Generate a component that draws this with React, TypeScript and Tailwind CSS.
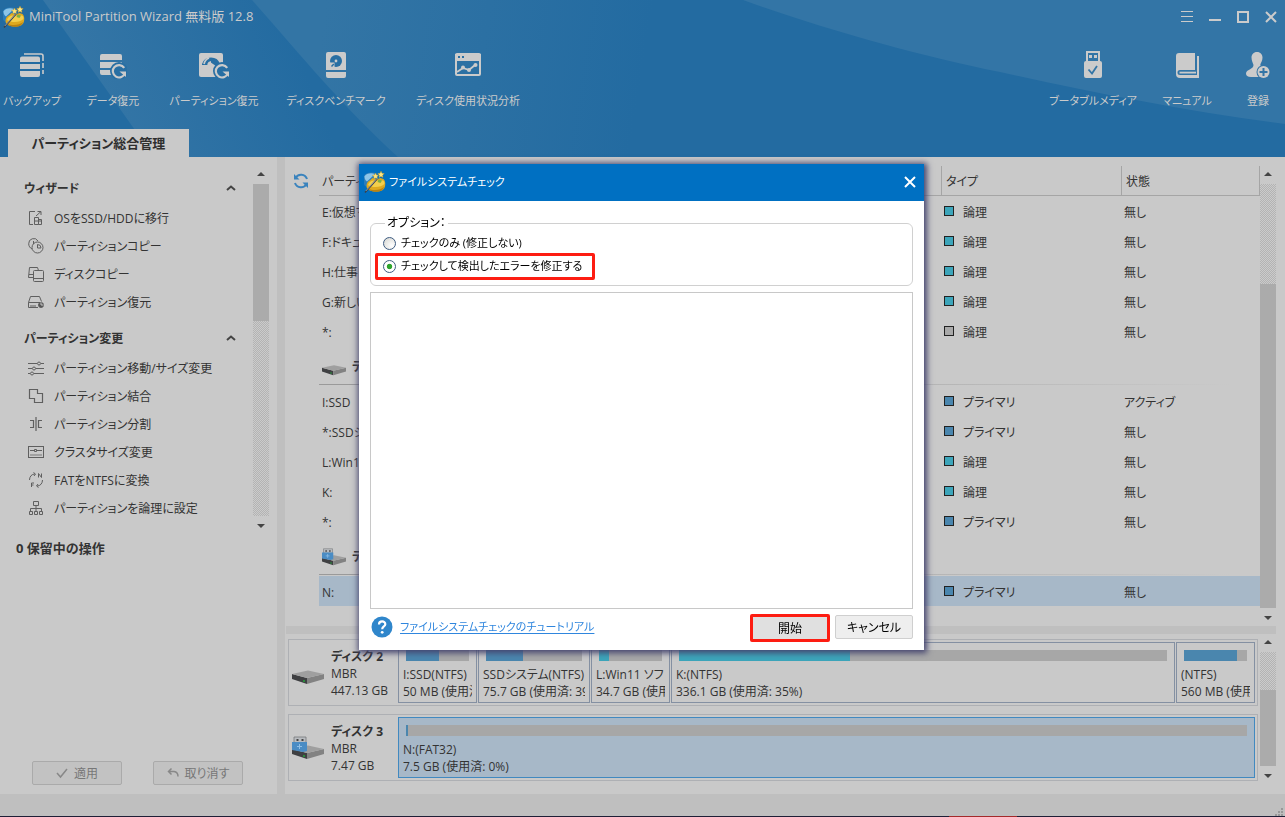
import { useState } from "react";
import type { ReactNode } from "react";

type Kind = "logical" | "primary" | "free";

type PartitionRow = { name: string; kind: Kind; status: string; selected?: boolean };

const KIND_LABEL: Record<Kind, string> = {
  logical: "論理",
  primary: "プライマリ",
  free: "論理",
};

const KIND_COLOR: Record<Kind, string> = {
  logical: "bg-[#3ca5ba]",
  primary: "bg-[#4a86ae]",
  free: "bg-[#a9a9a9]",
};

const TABLE: { disk: string; usb?: boolean; rows: PartitionRow[] }[] = [
  {
    disk: "",
    rows: [
      { name: "E:仮想マシン", kind: "logical", status: "無し" },
      { name: "F:ドキュメント", kind: "logical", status: "無し" },
      { name: "H:仕事", kind: "logical", status: "無し" },
      { name: "G:新しい", kind: "logical", status: "無し" },
      { name: "*:", kind: "free", status: "無し" },
    ],
  },
  {
    disk: "ディスク 2",
    rows: [
      { name: "I:SSD", kind: "primary", status: "アクティブ" },
      { name: "*:SSDシステム", kind: "primary", status: "無し" },
      { name: "L:Win11 ソフト", kind: "logical", status: "無し" },
      { name: "K:", kind: "logical", status: "無し" },
      { name: "*:", kind: "primary", status: "無し" },
    ],
  },
  {
    disk: "ディスク 3",
    usb: true,
    rows: [{ name: "N:", kind: "primary", status: "無し", selected: true }],
  },
];

type Block = { name: string; info: string; used: number; kind: Kind; width: string; selected?: boolean };

const DISKS: { name: string; size: string; usb?: boolean; blocks: Block[] }[] = [
  {
    name: "ディスク 2",
    size: "447.13 GB",
    blocks: [
      { name: "I:SSD(NTFS)", info: "50 MB (使用済: 52%)", used: 52, kind: "primary", width: "w-[79px]" },
      { name: "SSDシステム(NTFS)", info: "75.7 GB (使用済: 39%)", used: 39, kind: "primary", width: "w-[112px]" },
      { name: "L:Win11 ソフト", info: "34.7 GB (使用済: 16%)", used: 16, kind: "logical", width: "w-[79px]" },
      { name: "K:(NTFS)", info: "336.1 GB (使用済: 35%)", used: 35, kind: "logical", width: "flex-1" },
      { name: "(NTFS)", info: "560 MB (使用済: 84%)", used: 84, kind: "primary", width: "w-[79px]" },
    ],
  },
  {
    name: "ディスク 3",
    size: "7.47 GB",
    usb: true,
    blocks: [
      { name: "N:(FAT32)", info: "7.5 GB (使用済: 0%)", used: 0, kind: "primary", width: "flex-1", selected: true },
    ],
  },
];

/* ---------- icons ---------- */

function Logo() {
  return (
    <svg viewBox="0 0 22 22" className="size-[22px] shrink-0" aria-hidden="true">
      <path d="M0 5.500C0 3 4 1.500 8 1.500s6 1.500 6 3.500v7c0 3-4 4-8 4s-6-1-6-3z" fill="#2b7dbb" />
      <path d="M.5 5.500C2 2.500 7 1.500 11 3L3 10.500C1.500 9.500.5 8 .5 5.500z" fill="#8cc5e8" />
      <path d="M2.500 15c0-3 1.500-5 4-6l2-2 4 1.500 4-1.500 3 1c1.500 1.500 2 3.500 1.700 6-.5 5-4 6.500-9.200 6.500-5 0-9.500-1.500-9.500-5.500z" fill="#dfa91f" />
      <path d="M4 14c1-3 3-4.500 6-4.500h9c1.500 1 1.500 2 1.400 3.500-3 3-11 4.500-16.400 1z" fill="#f3cf4c" />
      <path d="M4.500 17.500c4 2.500 12 2 15.500-1.500-1 3.500-4 4.700-8 4.700-3.500 0-6.500-1-7.500-3.200z" fill="#b98212" />
      <path d="M11.500 2l1 2 2 .3-1.500 1.500.3 2.200-1.800-1-1.800 1L10 5.800 8.500 4.300l2-.3zM17 0l1 2.200 2.300.4-1.700 1.600.4 2.300-2-1.100-2 1.100.4-2.300-1.700-1.600 2.300-.4z" fill="#ffe680" stroke="#b98a16" strokeWidth=".4" />
      <path d="M14.500 8.500l3.500 1-1.500 2.500-3-1z" fill="#7fb043" />
      <path d="M1 21.500L13 8" stroke="#3d4148" strokeWidth="1.500" />
      <path d="M1.800 20L12.500 8" stroke="#c3ccd2" strokeWidth=".6" />
    </svg>
  );
}

function BackupIcon() {
  return (
    <svg viewBox="0 0 26 28" className="h-7 w-[26px]" aria-hidden="true">
      <path d="M1 7.500a2 2 0 0 1 2-2h16a2 2 0 0 1 2 2V11H1zM1 13h20v5H1zM1 20h20v4a2 2 0 0 1-2 2H3a2 2 0 0 1-2-2z" fill="currentColor" />
      <path d="M5 3h17a2 2 0 0 1 2 2v5M24 12v5M24 19v4" stroke="currentColor" strokeWidth="1.600" fill="none" />
    </svg>
  );
}

function Redo({ x, y }: { x: number; y: number }) {
  return (
    <g transform={`translate(${x} ${y})`}>
      <circle cx="8" cy="8" r="9" fill="#286fa3" />
      <path d="M13.200 4.800A6.200 6.200 0 1 0 14 10" fill="none" stroke="currentColor" strokeWidth="2.200" />
      <path d="M8.500 8.500H15V14z" fill="currentColor" />
    </g>
  );
}

function DataRecoveryIcon() {
  return (
    <svg viewBox="0 0 28 28" className="size-7" aria-hidden="true">
      <path d="M1 5a2 2 0 0 1 2-2h18a2 2 0 0 1 2 2v4H1zM1 11h22v6H1zM1 19h22v5H3a2 2 0 0 1-2-2z" fill="currentColor" />
      <Redo x={12} y={12} />
    </svg>
  );
}

function PartitionRecoveryIcon() {
  return (
    <svg viewBox="0 0 32 28" className="h-7 w-8" aria-hidden="true">
      <rect x="1" y="2" width="24" height="24" rx="2" fill="currentColor" />
      <path d="M4 13a9.500 9.500 0 0 1 18 0l-4 2-6-4-3 3H4z" fill="#286fa3" />
      <path d="M6 13c.7-3 2.500-5 5-6M10 13.500c.5-1.500 1.500-2.300 3-2.500" fill="none" stroke="currentColor" strokeWidth="1.800" />
      <circle cx="13" cy="14" r="1.500" fill="currentColor" />
      <Redo x={16} y={12} />
    </svg>
  );
}

function BenchmarkIcon() {
  return (
    <svg viewBox="0 0 22 28" className="h-7 w-[22px]" aria-hidden="true">
      <path d="M1 3a2 2 0 0 1 2-2h16a2 2 0 0 1 2 2v16H1zM1 21h20v4a2 2 0 0 1-2 2H3a2 2 0 0 1-2-2z" fill="currentColor" />
      <circle cx="11" cy="10" r="6" fill="#286fa3" />
      <circle cx="11" cy="10" r="1.400" fill="currentColor" />
      <path d="M5 11.500h4.500V17H5z" fill="currentColor" />
      <path d="M6.500 15.500l2.300-2.500" stroke="#286fa3" strokeWidth="1.400" />
    </svg>
  );
}

function UsageIcon() {
  return (
    <svg viewBox="0 0 28 28" className="size-7" aria-hidden="true">
      <rect x="2" y="3" width="24" height="21" rx="1" fill="none" stroke="currentColor" strokeWidth="2" />
      <path d="M1 3h26v7H1z" fill="currentColor" />
      <path d="M4 5h2v2H4zM8 5h2v2H8z" fill="#286fa3" />
      <path d="M3 21l6-4 6 2 6-5" fill="none" stroke="currentColor" strokeWidth="1.800" />
      <circle cx="9" cy="16.500" r="2" fill="currentColor" />
      <circle cx="15" cy="19" r="2" fill="currentColor" />
      <circle cx="21.500" cy="14" r="2" fill="currentColor" />
    </svg>
  );
}

function BootableIcon() {
  return (
    <svg viewBox="0 0 20 28" className="h-7 w-5" aria-hidden="true">
      <path d="M4 11V1h12v10" fill="none" stroke="currentColor" strokeWidth="2" />
      <path d="M6 4h3v3H6zM11 4h3v3h-3z" fill="currentColor" />
      <rect x="1" y="10" width="18" height="17" rx="2" fill="currentColor" />
      <path d="M5.500 18.500l3.500 4 5-7.500" fill="none" stroke="#3375a6" strokeWidth="1.800" />
    </svg>
  );
}

function ManualIcon() {
  return (
    <svg viewBox="0 0 24 28" className="h-7 w-6" aria-hidden="true">
      <path d="M1 5a3 3 0 0 1 3-3h16v17H5a2.500 2.500 0 0 0 0 5h17V5h2v22H5a4 4 0 0 1-4-4z" fill="currentColor" />
      <path d="M4.500 20.700H21v1.800H4.500z" fill="currentColor" />
    </svg>
  );
}

function RegisterIcon() {
  return (
    <svg viewBox="0 0 26 28" className="h-7 w-[26px]" aria-hidden="true">
      <path d="M12 1c3.500 0 5.500 2.600 5.500 5.500 0 3.200-1.500 5-2.200 7 0 2.500 3.700 3 5.200 4.500V26H6c-3.500 0-5-1.500-5-3.500 0-4 7.500-4 7.500-8.500C8 12 6.500 9.500 6.500 6.500 6.500 3.600 8.500 1 12 1z" fill="currentColor" />
      <circle cx="18.500" cy="21" r="7" fill="#3375a6" />
      <circle cx="18.500" cy="21" r="6" fill="currentColor" />
      <path d="M18.500 17v8M14.500 21h8" stroke="#3375a6" strokeWidth="2" />
    </svg>
  );
}

function LineIcon({ children }: { children: ReactNode }) {
  return (
    <svg viewBox="0 0 16 16" className="size-4 shrink-0" fill="none" stroke="#5f5f5f" aria-hidden="true">
      {children}
    </svg>
  );
}

const SIDE_ICONS = {
  migrate: (
    <LineIcon>
      <path d="M7 1.500H1.500v13H5M6.500 7.500h4v7h-4zM10.500 9.500h3v5h-3M7 11h7M8 6l5-4.500M9.500 1.500H13V5" />
    </LineIcon>
  ),
  copy: (
    <LineIcon>
      <circle cx="9.500" cy="9.500" r="5.500" />
      <path d="M9.500 6.500v3.500H13a3.500 3.500 0 0 0-3.500-3.500zM4 11C2 10 .7 8 .7 5.800A5 5 0 0 1 10 3M5.500 3v3" />
    </LineIcon>
  ),
  diskCopy: (
    <LineIcon>
      <rect x="5.500" y="4.500" width="10" height="11" rx="1" />
      <path d="M5.500 12.500h10M5 11.500H.5l1-10h8l1 3M1 8.500h4" />
    </LineIcon>
  ),
  recover: (
    <LineIcon>
      <path d="M.5 8.500l2-6h9l2 5M10 13.500H.5v-5h12M3 11v2M5 11v2M7 11v2" />
      <circle cx="13" cy="11" r="2.500" fill="#555" />
      <path d="M13 8.500V11h2.500" stroke="#c8c8c8" />
    </LineIcon>
  ),
  resize: (
    <LineIcon>
      <path d="M0 3.500h9M13 3.500h3M0 8.500h4M8 8.500h8M0 13.500h2M6 13.500h10" />
      <circle cx="11" cy="3.500" r="1.500" />
      <circle cx="6" cy="8.500" r="1.500" />
      <circle cx="4" cy="13.500" r="1.500" />
    </LineIcon>
  ),
  merge: (
    <LineIcon>
      <path d="M1.500 1.500h8v4h5v9h-8v-4h-5z" strokeWidth="1.200" />
    </LineIcon>
  ),
  split: (
    <LineIcon>
      <path d="M8 1v14M2 4.500h3.500v7H2M14 4.500h-3.500v7H14" strokeWidth="1.200" />
    </LineIcon>
  ),
  cluster: (
    <LineIcon>
      <rect x=".5" y="2.500" width="15" height="11" />
      <path d="M2 6.500h4M9 6.500h5M6.500 5.500h2v2h-2z" />
      <path d="M2.500 11h11" strokeDasharray="1 1" strokeWidth="1.500" />
    </LineIcon>
  ),
  convert: (
    <LineIcon>
      <path d="M1.500 8A6.500 6.500 0 0 1 7 1.800M5.500 .5L7.500 2 6 4M14.500 8A6.500 6.500 0 0 1 9 14.200M10.500 15.500L8.500 14l1.500-2M10.500 5.500v-4l3 4v-4M3.500 15v-4H6M3.500 13H5.500" />
    </LineIcon>
  ),
  logical: (
    <LineIcon>
      <path d="M5.500 1.500h5v4h-5zM8 5.500v6M2.500 11V8.500h11V11M1.500 11.500h3v3h-3zM6.500 11.500h3v3h-3zM11.500 11.500h3v3h-3z" />
    </LineIcon>
  ),
};

function DiskIcon({ usb, small }: { usb?: boolean; small?: boolean }) {
  return (
    <svg viewBox="0 0 32 24" className={small ? "h-[18px] w-6 shrink-0" : "h-6 w-8 shrink-0"} aria-hidden="true">
      <path d="M0 13l15 4v6L0 18z" fill="#3f4042" />
      <path d="M15 17l17-4v5l-17 5z" fill="#828282" />
      <path d="M0 13l16-3.500L32 13l-17 4z" fill="#9f9f9f" />
      <circle cx="12" cy="20" r="1" fill="#24a33a" />
      {usb && (
        <g>
          <path d="M2 1h12v6H2z" fill="#b9bcc0" stroke="#77797c" strokeWidth=".8" />
          <path d="M4.500 3h2v2h-2zM9.500 3h2v2h-2z" fill="#444" />
          <path d="M0 6h15v9l-4 1L0 14z" fill="#4a8cc4" />
          <path d="M7.500 8v5M5 10.500h5" stroke="#8fbfe6" />
        </g>
      )}
    </svg>
  );
}

/* ---------- shared bits ---------- */

function ScrollBar({ before, thumb, after }: { before: number; thumb: number; after: number }) {
  const hatch = "bg-[repeating-conic-gradient(#b3b3b3_0_25%,#cbcbcb_0_50%)] bg-[length:2px_2px]";
  return (
    <div className="flex w-4 shrink-0 flex-col" aria-hidden="true">
      <div className="flex h-4 items-center justify-center pb-1">
        <svg viewBox="0 0 8 4" className="h-1 w-2"><path d="M0 4l4-4 4 4z" fill="#444" /></svg>
      </div>
      <div className={hatch} style={{ flexGrow: before }} />
      <div className="bg-[#ababab]" style={{ flexGrow: thumb }} />
      <div className={hatch} style={{ flexGrow: after }} />
      <div className="flex h-4 items-center justify-center pt-1">
        <svg viewBox="0 0 8 4" className="h-1 w-2"><path d="M0 0h8L4 4z" fill="#444" /></svg>
      </div>
    </div>
  );
}

/* ---------- header ---------- */

const TOOLS_LEFT = [
  { label: "バックアップ", icon: <BackupIcon />, width: "w-14" },
  { label: "データ復元", icon: <DataRecoveryIcon />, width: "w-[58px]" },
  { label: "パーティション復元", icon: <PartitionRecoveryIcon />, width: "w-24" },
  { label: "ディスクベンチマーク", icon: <BenchmarkIcon />, width: "w-[100px]" },
  { label: "ディスク使用状況分析", icon: <UsageIcon />, width: "w-[116px]" },
];

const TOOLS_RIGHT = [
  { label: "ブータブルメディア", icon: <BootableIcon />, width: "w-[90px]" },
  { label: "マニュアル", icon: <ManualIcon />, width: "w-12" },
  { label: "登録", icon: <RegisterIcon />, width: "w-11" },
];

function ToolButton({ label, icon, width }: { label: string; icon: ReactNode; width: string }) {
  return (
    <button type="button" className={`flex flex-col items-center ${width}`}>
      {icon}
      <span className="mt-3 whitespace-nowrap text-[11px] leading-5">{label}</span>
    </button>
  );
}

function Header() {
  return (
    <header className="relative shrink-0 overflow-hidden bg-[#236ba1] text-[#cbcbcb]">
      <svg viewBox="0 0 1285 157" preserveAspectRatio="none" className="absolute inset-0 size-full" aria-hidden="true">
        <defs>
          <linearGradient id="beamA" gradientUnits="userSpaceOnUse" x1="70" y1="60" x2="270" y2="-20">
            <stop offset="0" stopColor="#3576a6" />
            <stop offset="1" stopColor="#3576a6" stopOpacity="0" />
          </linearGradient>
          <linearGradient id="beamB" gradientUnits="userSpaceOnUse" x1="320" y1="40" x2="640" y2="90">
            <stop offset="0" stopColor="#3375a5" />
            <stop offset="1" stopColor="#3375a5" stopOpacity="0" />
          </linearGradient>
        </defs>
        <path d="M43 0H252L398 157H154z" fill="url(#beamA)" />
        <path d="M252 0H740V157H398C340 104 300 54 252 0z" fill="url(#beamB)" />
        <path d="M743 0C820 28 920 56 1000 72C1090 92 1190 112 1285 124V0z" fill="#3375a6" />
      </svg>
      <div className="relative">
        <div className="flex h-[34px] items-center justify-between pl-[3px] pr-1.5">
          <div className="flex items-center gap-1">
            <Logo />
            <span className="text-[13px]">MiniTool Partition Wizard 無料版 12.8</span>
          </div>
          <div className="flex gap-3">
            <button type="button" aria-label="メニュー">
              <svg viewBox="0 0 16 16" className="size-4"><path d="M2 2.500h12M2 7.500h12M2 12.500h12" stroke="currentColor" /></svg>
            </button>
            <button type="button" aria-label="最小化">
              <svg viewBox="0 0 16 16" className="size-4"><path d="M2 11h12" stroke="currentColor" strokeWidth="2" /></svg>
            </button>
            <button type="button" aria-label="最大化">
              <svg viewBox="0 0 16 16" className="size-4"><path d="M3 3h10v10H3z" fill="none" stroke="currentColor" strokeWidth="2" /></svg>
            </button>
            <button type="button" aria-label="閉じる">
              <svg viewBox="0 0 16 16" className="size-4"><path d="M3 3l10 10M13 3L3 13" stroke="currentColor" strokeWidth="2" /></svg>
            </button>
          </div>
        </div>
        <div className="flex h-[95px] justify-between pl-1 pr-[5px] pt-[17px]">
          <div className="flex items-start gap-6">
            {TOOLS_LEFT.map((t) => <ToolButton key={t.label} {...t} />)}
          </div>
          <div className="flex items-start gap-[25px]">
            {TOOLS_RIGHT.map((t) => <ToolButton key={t.label} {...t} />)}
          </div>
        </div>
        <div className="ml-2 flex h-7 w-[181px] items-center justify-center bg-[#c9c9c9] pt-0.5 text-[13px] font-bold text-[#2f2f2f]">
          パーティション総合管理
        </div>
      </div>
    </header>
  );
}

/* ---------- sidebar ---------- */

const SECTIONS = [
  {
    title: "ウィザード",
    items: [
      { label: "OSをSSD/HDDに移行", icon: SIDE_ICONS.migrate },
      { label: "パーティションコピー", icon: SIDE_ICONS.copy },
      { label: "ディスクコピー", icon: SIDE_ICONS.diskCopy },
      { label: "パーティション復元", icon: SIDE_ICONS.recover },
    ],
  },
  {
    title: "パーティション変更",
    items: [
      { label: "パーティション移動/サイズ変更", icon: SIDE_ICONS.resize },
      { label: "パーティション結合", icon: SIDE_ICONS.merge },
      { label: "パーティション分割", icon: SIDE_ICONS.split },
      { label: "クラスタサイズ変更", icon: SIDE_ICONS.cluster },
      { label: "FATをNTFSに変換", icon: SIDE_ICONS.convert },
      { label: "パーティションを論理に設定", icon: SIDE_ICONS.logical },
    ],
  },
];

function Sidebar() {
  return (
    <aside className="flex w-[277px] shrink-0 flex-col pt-[11px]">
      <div className="flex pr-2">
        <nav className="flex flex-1 flex-col gap-1.5 pb-2.5 pt-1">
          {SECTIONS.map((s) => (
            <section key={s.title}>
              <h2 className="flex h-8 items-center justify-between pl-6 pr-[17px] font-bold">
                <span className="pt-0.5">{s.title}</span>
                <svg viewBox="0 0 10 6" className="h-1.5 w-2.5" aria-hidden="true">
                  <path d="M1 5l4-3.500L9 5" fill="none" stroke="#444" strokeWidth="2" />
                </svg>
              </h2>
              <ul>
                {s.items.map((it) => (
                  <li key={it.label}>
                    <a href="#" className="flex h-7 items-center gap-2.5 pl-7">
                      {it.icon}
                      <span className="pt-0.5">{it.label}</span>
                    </a>
                  </li>
                ))}
              </ul>
            </section>
          ))}
        </nav>
        <ScrollBar before={0} thumb={137} after={195} />
      </div>
      <p className="pl-4 text-[13px] font-bold leading-8">0 保留中の操作</p>
      <div className="mt-auto flex gap-[31px] pb-[9px] pl-8 text-[#777]">
        <button type="button" className="flex h-6 w-[90px] items-center justify-center gap-1.5 rounded-xs border border-[#aaa] bg-[#c2c2c2]">
          <svg viewBox="0 0 12 12" className="size-3" aria-hidden="true"><path d="M1 6l3.500 4L11 2" fill="none" stroke="#888" strokeWidth="1.500" /></svg>
          <span className="pt-0.5">適用</span>
        </button>
        <button type="button" className="flex h-6 w-[90px] items-center justify-center gap-1.5 rounded-xs border border-[#aaa] bg-[#c2c2c2]">
          <svg viewBox="0 0 12 12" className="size-3" aria-hidden="true"><path d="M4.500 1.500L1.500 4.500l3 3M1.500 4.500H7q4 .5 4 5" fill="none" stroke="#888" strokeWidth="1.500" /></svg>
          <span className="pt-0.5">取り消す</span>
        </button>
      </div>
    </aside>
  );
}

/* ---------- partition table ---------- */

function PartitionTable() {
  return (
    <div className="flex flex-1 pr-[9px] pt-[9px]">
      <button type="button" aria-label="更新" className="h-[30px] w-[34px] shrink-0 pl-2">
        <svg viewBox="0 0 16 16" className="size-4" fill="none" stroke="#3a83bd" strokeWidth="2" aria-hidden="true">
          <path d="M14 6A6.300 6.300 0 0 0 2.500 5M2 10a6.300 6.300 0 0 0 11.500 1" />
          <path d="M1 1v5.500h5.500zM15 15V9.500H9.500z" fill="#3a83bd" stroke="none" />
        </svg>
      </button>
      <div className="flex-1">
        <table className="w-full table-fixed border-separate border-spacing-0 text-left">
          <thead>
            <tr className="h-[30px]">
              <th className="border-b border-[#a5a5a5] p-0 pl-[3px] pt-0.5 font-normal">パーティション</th>
              <th className="w-[180px] border-b border-l border-[#a5a5a5] p-0 pl-1 pt-0.5 font-normal">タイプ</th>
              <th className="w-[139px] border-x border-b border-[#a5a5a5] p-0 pl-1 pt-0.5 font-normal">状態</th>
            </tr>
          </thead>
          {TABLE.map((g) => (
            <tbody key={g.disk || "first"}>
              {g.disk && (
                <tr>
                  <th colSpan={3} className="p-0 pb-px">
                    <div className="flex h-[38px] items-center gap-1.5 pl-[3px] pt-1 font-bold">
                      <DiskIcon usb={g.usb} small />
                      {g.disk}
                    </div>
                    <div className="h-px bg-linear-to-r from-[#9a9a9a] from-20% to-[#c9c9c9] to-97%" />
                  </th>
                </tr>
              )}
              {g.rows.map((r, i) => (
                <tr key={i} className={r.selected ? "h-[30px] bg-[#a7b8c8]" : "h-[30px]"}>
                  <td className="overflow-hidden whitespace-nowrap p-0 pl-[3px] pt-[3px]">{r.name}</td>
                  <td className="p-0 pl-[3px]">
                    <div className="flex items-center gap-[9px]">
                      <span className={`size-2.5 border border-[#222] ${KIND_COLOR[r.kind]}`} />
                      <span className="pt-[3px]">{KIND_LABEL[r.kind]}</span>
                    </div>
                  </td>
                  <td className="p-0 pl-[3px] pt-[3px]">{r.status}</td>
                </tr>
              ))}
            </tbody>
          ))}
        </table>
      </div>
      <div className="flex py-0.5">
        <ScrollBar before={100} thumb={324} after={0} />
      </div>
    </div>
  );
}

/* ---------- disk map ---------- */

function DiskMap() {
  return (
    <div className="flex gap-0.5 pl-[3px] pr-[9px]">
      <div className="flex min-w-0 flex-1 flex-col gap-2 pb-[13px] pt-[5px]">
        {DISKS.map((d) => (
          <div key={d.name} className="flex h-[67px] border border-[#aeb0b4] p-0.5">
            <div className="flex w-[107px] shrink-0 items-center gap-[7px] pl-px">
              <DiskIcon usb={d.usb} />
              <div className="pt-0.5 leading-[17px]">
                <div className="font-bold">{d.name}</div>
                <div>MBR</div>
                <div className="whitespace-nowrap">{d.size}</div>
              </div>
            </div>
            <div className="flex min-w-0 flex-1 gap-px">
              {d.blocks.map((b) => (
                <div
                  key={b.name}
                  className={`${b.width} shrink-0 overflow-hidden border px-1 pt-[7px] ${b.selected ? "border-[#4189c0] bg-[#a7b8c8]" : "border-[#8490a2]"}`}
                >
                  <div className="mx-[3px] h-[11px] bg-[#a7a7a7]">
                    <div className={`h-full min-w-0.5 ${KIND_COLOR[b.kind]}`} style={{ width: `${b.used}%` }} />
                  </div>
                  <div className="mt-[5px] overflow-hidden whitespace-nowrap leading-[17px]">
                    <div>{b.name}</div>
                    <div>{b.info}</div>
                  </div>
                </div>
              ))}
            </div>
          </div>
        ))}
      </div>
      <div className="flex pb-3 pt-0.5">
        <ScrollBar before={38} thumb={76} after={0} />
      </div>
    </div>
  );
}

/* ---------- dialog ---------- */

const RADIO =
  "size-[13px] shrink-0 appearance-none rounded-full border border-[#3d5b80] bg-radial-[at_70%_70%] from-white to-[#d5d5d0] checked:bg-radial checked:from-[#2fa52f] checked:from-30% checked:to-white checked:to-40%";

function CheckDialog() {
  const [fix, setFix] = useState(true);

  return (
    <div className="fixed inset-0 flex items-center justify-center pb-[3px] pr-0.5">
      <div
        role="dialog"
        aria-labelledby="dialog-title"
        className="flex h-[486px] w-[565px] flex-col bg-white text-black shadow-[1px_1px_6px_2px_#45456f]"
      >
        <div className="flex h-[37px] items-center justify-between bg-[#0070c2] pb-0.5 pl-[5px] pr-2 text-white">
          <div className="flex items-center gap-[3px]">
            <Logo />
            <h1 id="dialog-title" className="pt-0.5 text-[11px]">ファイルシステムチェック</h1>
          </div>
          <button type="button" aria-label="閉じる">
            <svg viewBox="0 0 12 12" className="size-3"><path d="M1 1l10 10M11 1L1 11" stroke="currentColor" strokeWidth="2" /></svg>
          </button>
        </div>
        <div className="flex flex-1 flex-col px-[11px] pt-3">
          <fieldset className="rounded-md border border-[#d0d0d0] pb-[5px] pl-1 text-[11px]">
            <legend className="ml-2.5 px-0.5 text-xs leading-5">オプション：</legend>
            <label className="flex h-5 items-center gap-[5px] pl-2">
              <input type="radio" name="mode" className={RADIO} checked={!fix} onChange={() => setFix(false)} />
              チェックのみ (修正しない)
            </label>
            <label className="flex h-[27px] w-[220px] items-center gap-[5px] rounded-xs border-3 border-[#fd1d12] pl-[5px]">
              <input type="radio" name="mode" className={RADIO} checked={fix} onChange={() => setFix(true)} />
              <span className="whitespace-nowrap">チェックして検出したエラーを修正する</span>
            </label>
          </fieldset>
          <textarea readOnly aria-label="結果" className="mt-1.5 flex-1 resize-none border border-[#c8c8c8] outline-none" />
          <div className="flex h-[41px] items-start justify-between pt-[5px]">
            <div className="flex h-[26px] items-center gap-[7px] pl-px">
              <svg viewBox="0 0 22 22" className="size-[22px]" aria-hidden="true">
                <circle cx="11" cy="11" r="10.500" fill="#2f86cb" />
                <path d="M8 8.500c0-4 6.300-4 6.300-.3 0 2.300-3.100 2.300-3.100 5" fill="none" stroke="#fff" strokeWidth="2.200" />
                <circle cx="11.200" cy="16.300" r="1.400" fill="#fff" />
              </svg>
              <a href="#" className="text-[11px] text-[#2f86de] underline underline-offset-2">ファイルシステムチェックのチュートリアル</a>
            </div>
            <div className="flex items-start gap-[5px]">
              <button type="button" className="h-7 w-20 rounded-xs border-3 border-[#fd1d12] bg-[#e0e0e0] pt-0.5">開始</button>
              <button type="button" className="mt-px h-6 w-[78px] rounded-xs border border-[#cfcfcf] bg-[#eee] pt-0.5">キャンセル</button>
            </div>
          </div>
        </div>
      </div>
    </div>
  );
}

export default function App() {
  return (
    <div className="flex min-h-screen flex-col bg-[#c9c9c9] font-['Open_Sans','Noto_Sans_CJK_JP',sans-serif] text-xs text-[#333] [font-feature-settings:'palt']">
      <Header />
      <div className="flex flex-1">
        <Sidebar />
        <div className="w-2 shrink-0 bg-[#bfbfbf]" />
        <main className="flex min-w-0 flex-1 flex-col">
          <PartitionTable />
          <div className="ml-px mr-[9px] h-2 shrink-0 bg-[#bfbfbf]" />
          <DiskMap />
        </main>
      </div>
      <footer className="flex h-[23px] shrink-0 flex-col bg-[#bfbfbf]">
        <div className="flex flex-1 items-end justify-end pr-0.5">
          <svg viewBox="0 0 8 8" className="size-2" aria-hidden="true">
            <path d="M6 0h2v2H6zM3 3h2v2H3zM6 3h2v2H6zM0 6h2v2H0zM3 6h2v2H3zM6 6h2v2H6z" fill="#989898" />
          </svg>
        </div>
        <div className="flex h-px justify-end bg-[#1e1e36] pr-[268px]">
          <div className="w-[68px] bg-[#a3292a]" />
        </div>
      </footer>
      <CheckDialog />
    </div>
  );
}
